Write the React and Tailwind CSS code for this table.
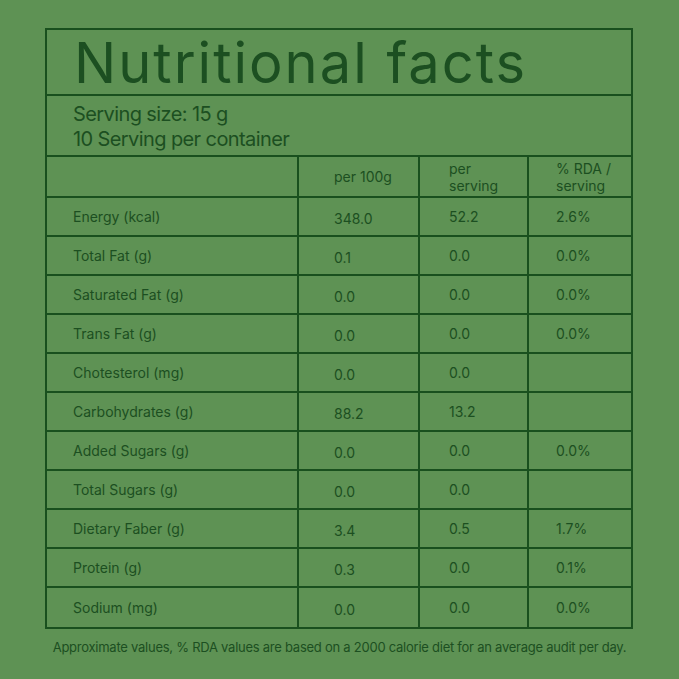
const rows = [
  ["Energy (kcal)", "348.0", "52.2", "2.6%"],
  ["Total Fat (g)", "0.1", "0.0", "0.0%"],
  ["Saturated Fat (g)", "0.0", "0.0", "0.0%"],
  ["Trans Fat (g)", "0.0", "0.0", "0.0%"],
  ["Chotesterol (mg)", "0.0", "0.0", ""],
  ["Carbohydrates (g)", "88.2", "13.2", ""],
  ["Added Sugars (g)", "0.0", "0.0", "0.0%"],
  ["Total Sugars (g)", "0.0", "0.0", ""],
  ["Dietary Faber (g)", "3.4", "0.5", "1.7%"],
  ["Protein (g)", "0.3", "0.0", "0.1%"],
  ["Sodium (mg)", "0.0", "0.0", "0.0%"],
];

export default function App() {
  return (
    <div
      className="w-[679px] h-[679px] bg-[#5e9254] text-[#1c4f21] pt-[28px] pl-[45px]"
      style={{ fontFamily: "Inter, 'Noto Sans', sans-serif" }}
    >
      <div className="w-[588px] border-2 border-[#19501e]">
        <div className="h-[66px] border-b-2 border-[#19501e] pl-[27px] flex items-center">
          <h1 className="text-[56px] leading-none font-normal tracking-[2px] mt-[2px]">Nutritional facts</h1>
        </div>
        <div className="h-[61px] border-b-2 border-[#19501e] pl-[26px] pt-[6px] text-[20px] leading-[25px] tracking-[-0.6px]">
          <p>Serving size: 15 g</p>
          <p>10 Serving per container</p>
        </div>
        <div className="grid grid-cols-[252px_121px_109px_1fr] h-[41px] border-b-2 border-[#19501e] text-[14px] leading-[17px]">
          <div className="border-r-2 border-[#19501e]"></div>
          <div className="border-r-2 border-[#19501e] flex items-center pl-[35px]">per 100g</div>
          <div className="border-r-2 border-[#19501e] flex flex-col justify-center pl-[29px]">
            <span>per</span>
            <span>serving</span>
          </div>
          <div className="flex flex-col justify-center pl-[27px]">
            <span>% RDA /</span>
            <span>serving</span>
          </div>
        </div>
        {rows.map((r, i) => (
          <div
            key={r[0]}
            className={
              "grid grid-cols-[252px_121px_109px_1fr] h-[39px] text-[14px] " +
              (i < rows.length - 1 ? "border-b-2 border-[#19501e]" : "")
            }
          >
            <div className="border-r-2 border-[#19501e] flex items-center pl-[26px]">{r[0]}</div>
            <div className="border-r-2 border-[#19501e] flex items-center pl-[35px] pt-[3px]">{r[1]}</div>
            <div className="border-r-2 border-[#19501e] flex items-center pl-[29px]">{r[2]}</div>
            <div className="flex items-center pl-[27px]">{r[3]}</div>
          </div>
        ))}
      </div>
      <p className="text-[13px] mt-[9px] -ml-[45px] w-[679px] text-center tracking-[-0.25px]">
        Approximate values, % RDA values are based on a 2000 calorie diet for an average audit per day.
      </p>
    </div>
  );
}
